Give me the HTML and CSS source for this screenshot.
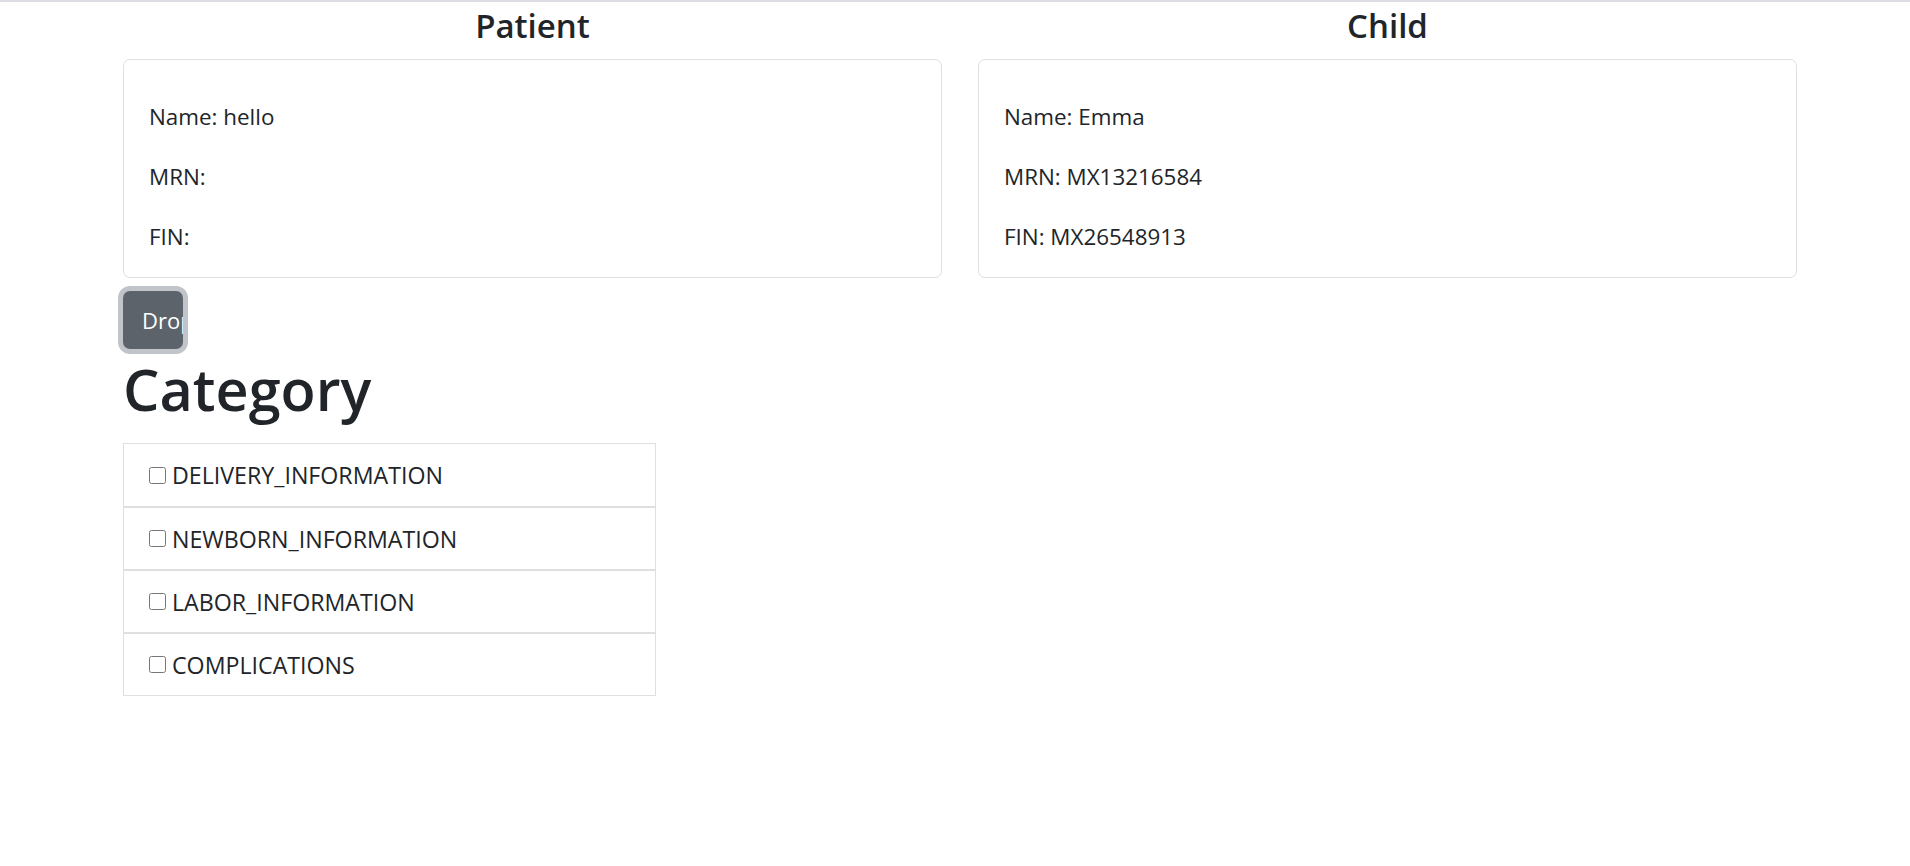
FILE: index.html
```html
<!DOCTYPE html>
<html lang="en">
<head>
<meta charset="utf-8">
<title>Patient / Child</title>
<link rel="stylesheet" href="styles.css">
</head>
<body>
<div class="topbar"></div>
<main class="container">
  <div class="cards">
    <section class="col">
      <h2 class="col-title">Patient</h2>
      <div class="card">
        <p>Name: hello</p>
        <p>MRN: </p>
        <p>FIN: </p>
      </div>
    </section>
    <section class="col">
      <h2 class="col-title">Child</h2>
      <div class="card">
        <p>Name: Emma</p>
        <p>MRN: MX13216584</p>
        <p>FIN: MX26548913</p>
      </div>
    </section>
  </div>
  <div class="btn-wrap">
    <button class="btn" type="button">Dropdown</button>
  </div>
  <h1 class="category">Category</h1>
  <ul class="list">
    <li class="item"><label><input type="checkbox"> DELIVERY_INFORMATION</label></li>
    <li class="item"><label><input type="checkbox"> NEWBORN_INFORMATION</label></li>
    <li class="item"><label><input type="checkbox"> LABOR_INFORMATION</label></li>
    <li class="item"><label><input type="checkbox"> COMPLICATIONS</label></li>
  </ul>
</main>
</body>
</html>
```

FILE: styles.css
```css
* { box-sizing: border-box; }
html, body { margin: 0; padding: 0; background: #fff; }
body {
  font-family: "Open Sans", "Noto Sans", sans-serif;
  font-size: 22.4px;
  color: #212529;
  width: 1910px;
  height: 866px;
  overflow: hidden;
}
.topbar {
  height: 2px;
  border-bottom: 2px solid #dcdce2;
}
.container {
  padding: 0 113px 0 123px;
}
.cards {
  display: grid;
  grid-template-columns: 1fr 1fr;
  column-gap: 36px;
}
.col-title {
  margin: 3px 0 12px;
  text-align: center;
  font-size: 33px;
  font-weight: 600;
  line-height: 42px;
}
.card {
  border: 1px solid #dfdfe1;
  border-radius: 7px;
  height: 219px;
  padding: 39px 25px 0;
}
.card p {
  margin: 0 0 24px;
  line-height: 36px;
  white-space: pre;
}
.btn-wrap {
  padding-top: 13px;
}
.btn {
  display: block;
  width: 60px;
  height: 58px;
  padding: 0 0 0 19px;
  border: none;
  border-radius: 7px;
  background: #5c636a;
  color: #fff;
  font-family: inherit;
  font-size: 22px;
  text-align: left;
  white-space: nowrap;
  overflow: hidden;
  box-shadow: 0 0 0 5px #c1c4c8;
}
.category {
  margin: 4px 0 18px;
  font-size: 57.5px;
  font-weight: 600;
  line-height: 72px;
}
.list {
  list-style: none;
  margin: 0;
  padding: 0;
  width: 533px;
  border: 1px solid #dfdfe1;
}
.item {
  height: 63px;
  display: flex;
  align-items: center;
  padding: 0 25px;
  border-top: 2px solid #dfdfe1;
}
.item:first-child { border-top: none; height: 62px; }
.item label {
  display: flex;
  align-items: center;
  gap: 6px;
  font-size: 23.2px;
}
.item input {
  margin: 0;
  width: 17px;
  height: 17px;
}
```
